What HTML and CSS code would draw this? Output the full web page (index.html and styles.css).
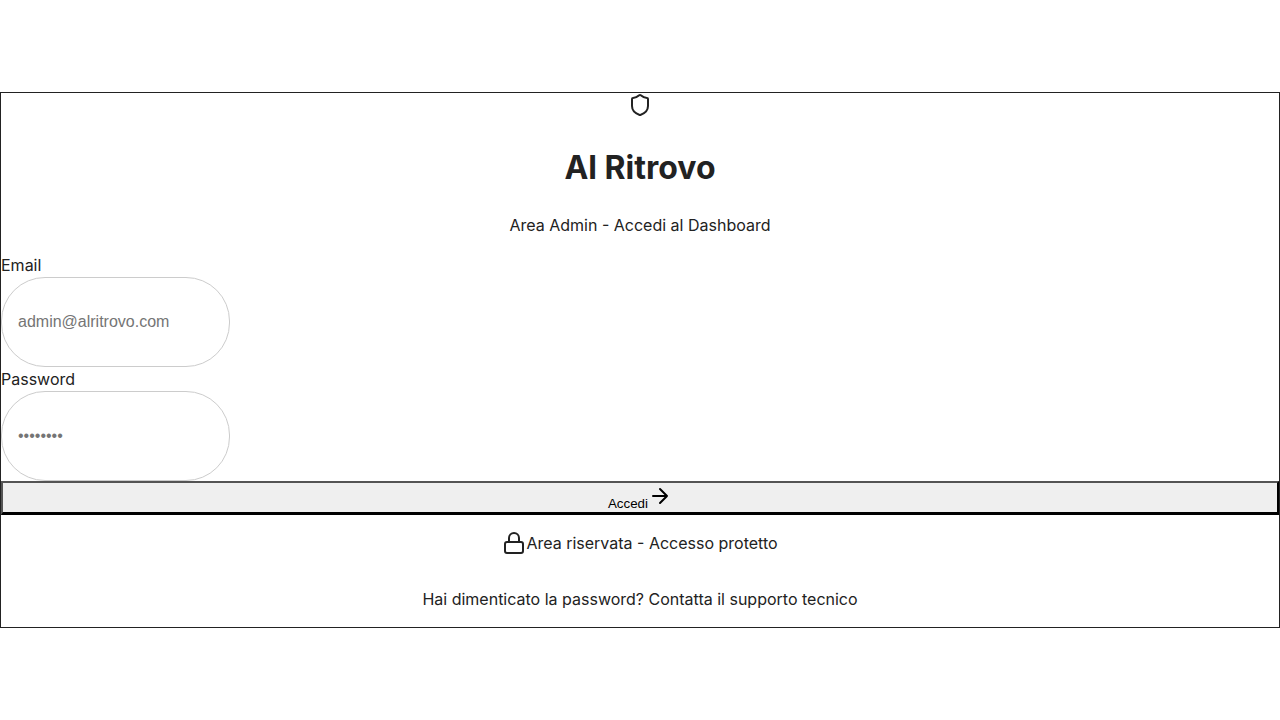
FILE: index.html
```html
<!DOCTYPE html>
<html lang="it">
<head>
<meta charset="utf-8">
<meta name="viewport" content="width=device-width, initial-scale=1">
<title>Al Ritrovo</title>
<link rel="stylesheet" href="styles.css">
</head>
<body>
<main class="page">
  <section class="card">
    <header class="card-header">
      <svg class="icon" viewBox="0 0 24 24" aria-hidden="true"><path d="M20 13c0 5-3.500 7.500-7.660 8.950a1 1 0 0 1-.67-.01C7.500 20.500 4 18 4 13V6a1 1 0 0 1 1-1c2 0 4.500-1.200 6.240-2.720a1.170 1.170 0 0 1 1.520 0C14.510 3.810 17 5 19 5a1 1 0 0 1 1 1z"/></svg>
      <h1 class="title">Al Ritrovo</h1>
      <p class="subtitle">Area Admin - Accedi al Dashboard</p>
    </header>
    <form class="form">
      <label class="label" for="email">Email</label>
      <input class="input" id="email" type="email" placeholder="admin@alritrovo.com">
      <label class="label" for="password">Password</label>
      <input class="input" id="password" type="password" placeholder="••••••••">
      <button class="submit" type="submit">Accedi<svg class="icon" viewBox="0 0 24 24" aria-hidden="true"><path d="M5 12h14M12 5l7 7-7 7"/></svg></button>
    </form>
    <div class="notice">
      <svg class="icon" viewBox="0 0 24 24" aria-hidden="true"><rect x="3" y="11" width="18" height="11" rx="2"/><path d="M7 11V7a5 5 0 0 1 10 0v4"/></svg>
      <span>Area riservata - Accesso protetto</span>
    </div>
    <p class="help">Hai dimenticato la password? Contatta il supporto tecnico</p>
  </section>
</main>
</body>
</html>
```
FILE: styles.css
```css
* {
  box-sizing: border-box;
}

body {
  margin: 0;
  background: #fff;
  color: #222;
  font-family: Inter, sans-serif;
  font-size: 16px;
  line-height: 24px;
}

.page {
  display: flex;
  align-items: center;
  min-height: 100vh;
}

.card {
  flex: 1;
  border: 1px solid #222;
}

.card-header {
  text-align: center;
}

.icon {
  width: 24px;
  height: 24px;
  fill: none;
  stroke: currentColor;
  stroke-width: 2;
  stroke-linecap: round;
  stroke-linejoin: round;
}

.title {
  margin: 21px 0;
  font-size: 32px;
  font-weight: 700;
  line-height: 48px;
}

.subtitle {
  margin: 0 0 16px;
}

.form {
  display: flex;
  flex-direction: column;
}

.input {
  width: 229px;
  max-width: 100%;
  height: 90px;
  padding: 0 16px;
  border: 1px solid #ccc;
  border-radius: 44px;
  background: #fff;
  color: #222;
  font-family: "Liberation Sans", Arial, sans-serif;
  font-size: 16px;
}

.input::placeholder {
  color: #757575;
}

.submit {
  padding: 1px 6px;
  border: 2px outset #000;
  border-bottom-width: 3px;
  border-radius: 0;
  background: #efefef;
  color: #000;
  font-family: "Liberation Sans", Arial, sans-serif;
  line-height: normal;
}

.notice {
  display: flex;
  justify-content: center;
  align-items: center;
  margin: 16px 0;
}

.help {
  margin: 32px 0 16px;
  text-align: center;
}
```
